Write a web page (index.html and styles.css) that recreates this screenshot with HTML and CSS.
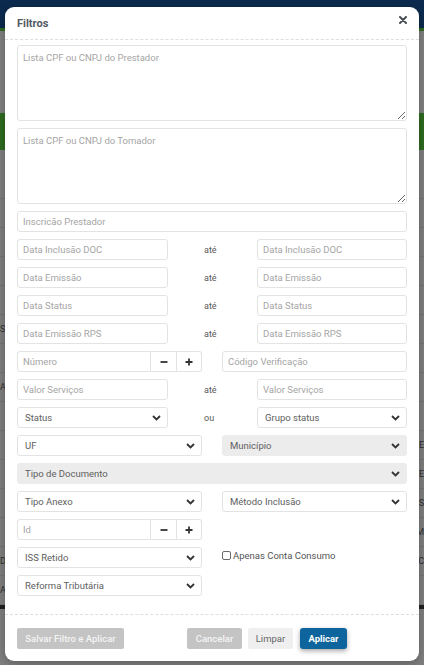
FILE: index.html
```html
<!DOCTYPE html>
<html lang="pt-BR">
<head>
<meta charset="utf-8">
<title>Filtros</title>
<link rel="stylesheet" href="styles.css">
</head>
<body>
<div class="page">
  <div class="topbar"></div>
  <div class="accent"></div>
  <div class="page-top"></div>
  <div class="green-band"></div>
  <div class="table">
    <div class="trow"><span></span><span></span></div>
    <div class="trow"><span></span><span></span></div>
    <div class="trow"><span></span><span></span></div>
    <div class="trow"><span></span><span></span></div>
    <div class="trow"><span></span><span></span></div>
    <div class="trow"><span>S</span><span></span></div>
    <div class="trow"><span></span><span></span></div>
    <div class="trow"><span>A</span><span></span></div>
    <div class="trow"><span></span><span></span></div>
    <div class="trow"><span></span><span>E</span></div>
    <div class="trow"><span></span><span>E</span></div>
    <div class="trow"><span></span><span>S</span></div>
    <div class="trow"><span></span><span>M</span></div>
    <div class="trow"><span>D</span><span>IC</span></div>
    <div class="trow"><span>A</span><span></span></div>
    <div class="tfoot"></div>
  </div>
</div>

<div class="modal">
  <div class="modal-header">
    <h2 class="modal-title">Filtros</h2>
    <button class="close" type="button" aria-label="Fechar">
      <svg width="8" height="8" viewBox="0 0 8 8"><path d="M1 1L7 7M7 1L1 7" stroke="#4b4f56" stroke-width="2" stroke-linecap="round"/></svg>
    </button>
  </div>

  <div class="modal-body">
    <textarea class="field area" placeholder="Lista CPF ou CNPJ do Prestador"></textarea>
    <textarea class="field area" placeholder="Lista CPF ou CNPJ do Tomador"></textarea>
    <input class="field" placeholder="Inscricão Prestador">

    <div class="range">
      <input class="field" placeholder="Data Inclusão DOC">
      <span class="sep">até</span>
      <input class="field" placeholder="Data Inclusão DOC">
    </div>
    <div class="range">
      <input class="field" placeholder="Data Emissão">
      <span class="sep">até</span>
      <input class="field" placeholder="Data Emissão">
    </div>
    <div class="range">
      <input class="field" placeholder="Data Status">
      <span class="sep">até</span>
      <input class="field" placeholder="Data Status">
    </div>
    <div class="range">
      <input class="field" placeholder="Data Emissão RPS">
      <span class="sep">até</span>
      <input class="field" placeholder="Data Emissão RPS">
    </div>

    <div class="pair">
      <div class="stepper">
        <input class="field" placeholder="Número">
        <button class="step-btn" type="button"><svg width="8" height="8" viewBox="0 0 8 8"><path d="M0.5 4H7.5" stroke="#333" stroke-width="1.8"/></svg></button>
        <button class="step-btn last" type="button"><svg width="8" height="8" viewBox="0 0 8 8"><path d="M0.5 4H7.5M4 0.5V7.5" stroke="#333" stroke-width="1.8"/></svg></button>
      </div>
      <input class="field" placeholder="Código Verificação">
    </div>

    <div class="range">
      <input class="field" placeholder="Valor Serviços">
      <span class="sep">até</span>
      <input class="field" placeholder="Valor Serviços">
    </div>

    <div class="range">
      <div class="select"><span>Status</span><svg class="chev" width="9" height="6" viewBox="0 0 9 6"><path d="M1 1L4.5 4.5L8 1" fill="none" stroke="#333" stroke-width="1.8"/></svg></div>
      <span class="sep">ou</span>
      <div class="select"><span>Grupo status</span><svg class="chev" width="9" height="6" viewBox="0 0 9 6"><path d="M1 1L4.5 4.5L8 1" fill="none" stroke="#333" stroke-width="1.8"/></svg></div>
    </div>

    <div class="pair">
      <div class="select"><span>UF</span><svg class="chev" width="9" height="6" viewBox="0 0 9 6"><path d="M1 1L4.5 4.5L8 1" fill="none" stroke="#333" stroke-width="1.8"/></svg></div>
      <div class="select disabled"><span>Município</span><svg class="chev" width="9" height="6" viewBox="0 0 9 6"><path d="M1 1L4.5 4.5L8 1" fill="none" stroke="#333" stroke-width="1.8"/></svg></div>
    </div>

    <div class="select disabled"><span>Tipo de Documento</span><svg class="chev" width="9" height="6" viewBox="0 0 9 6"><path d="M1 1L4.5 4.5L8 1" fill="none" stroke="#333" stroke-width="1.8"/></svg></div>

    <div class="pair">
      <div class="select"><span>Tipo Anexo</span><svg class="chev" width="9" height="6" viewBox="0 0 9 6"><path d="M1 1L4.5 4.5L8 1" fill="none" stroke="#333" stroke-width="1.8"/></svg></div>
      <div class="select"><span>Método Inclusão</span><svg class="chev" width="9" height="6" viewBox="0 0 9 6"><path d="M1 1L4.5 4.5L8 1" fill="none" stroke="#333" stroke-width="1.8"/></svg></div>
    </div>

    <div class="pair">
      <div class="stepper">
        <input class="field" placeholder="Id">
        <button class="step-btn" type="button"><svg width="8" height="8" viewBox="0 0 8 8"><path d="M0.5 4H7.5" stroke="#333" stroke-width="1.8"/></svg></button>
        <button class="step-btn last" type="button"><svg width="8" height="8" viewBox="0 0 8 8"><path d="M0.5 4H7.5M4 0.5V7.5" stroke="#333" stroke-width="1.8"/></svg></button>
      </div>
    </div>

    <div class="pair">
      <div class="select"><span>ISS Retido</span><svg class="chev" width="9" height="6" viewBox="0 0 9 6"><path d="M1 1L4.5 4.5L8 1" fill="none" stroke="#333" stroke-width="1.8"/></svg></div>
      <label class="check"><input type="checkbox" class="box"><span>Apenas Conta Consumo</span></label>
    </div>

    <div class="pair">
      <div class="select"><span>Reforma Tributária</span><svg class="chev" width="9" height="6" viewBox="0 0 9 6"><path d="M1 1L4.5 4.5L8 1" fill="none" stroke="#333" stroke-width="1.8"/></svg></div>
    </div>
  </div>

  <div class="modal-footer">
    <button class="btn btn-muted btn-save" type="button">Salvar Filtro e Aplicar</button>
    <div class="actions">
      <button class="btn btn-muted btn-cancel" type="button">Cancelar</button>
      <button class="btn btn-light" type="button">Limpar</button>
      <button class="btn btn-primary" type="button">Aplicar</button>
    </div>
  </div>
</div>
</body>
</html>
```

FILE: styles.css
```css
* {
  box-sizing: border-box;
}

body {
  margin: 0;
  width: 424px;
  height: 665px;
  overflow: hidden;
  position: relative;
  background: #7e7e7e;
  font-family: Roboto, "Liberation Sans", Arial, sans-serif;
}

/* dimmed page behind the dialog */
.topbar {
  height: 28px;
  background: #0c2a4d;
}

.accent {
  height: 3px;
  background: #2f6b21;
}

.page-top {
  height: 82px;
  background: #7f7f7f;
}

.green-band {
  height: 37px;
  background: #2e6a20;
}

.table {
  padding-top: 20px;
}

.trow {
  height: 29px;
  border-bottom: 1px solid #737373;
  display: flex;
  align-items: center;
  justify-content: space-between;
  font-size: 9px;
  color: #2e2e2e;
}

.tfoot {
  height: 4px;
  background: #1f1f1f;
}

/* dialog */
.modal {
  position: absolute;
  top: 7px;
  left: 5px;
  width: 414px;
  height: 654px;
  background: #fff;
  border-radius: 9px;
  display: flex;
  flex-direction: column;
  box-shadow: 0 2px 8px rgba(0, 0, 0, 0.25);
}

.modal-header {
  flex: none;
  height: 33px;
  padding: 0 12px;
  display: flex;
  align-items: center;
  justify-content: space-between;
  border-bottom: 1px dashed #dedede;
}

.modal-title {
  margin: 0;
  font-size: 11px;
  font-weight: 700;
  color: #525963;
}

.close {
  border: 0;
  background: none;
  padding: 0;
  width: 8px;
  height: 8px;
  margin-top: -7px;
  display: flex;
}

.modal-body {
  flex: 1;
  padding: 5px 12px 17px;
  display: flex;
  flex-direction: column;
  gap: 7px;
}

.field {
  display: block;
  width: 100%;
  height: 21px;
  margin: 0;
  padding: 0 5px;
  border: 1px solid #e3e3e3;
  border-radius: 3px;
  background: #fff;
  font-family: Roboto, "Liberation Sans", Arial, sans-serif;
  font-size: 9.5px;
  color: #555;
  outline: none;
}

.field::placeholder {
  color: #a5a5a5;
}

.area {
  height: 76px;
  padding: 6px 5px;
  resize: vertical;
}

.range {
  display: grid;
  grid-template-columns: 151px 1fr 150px;
  align-items: center;
}

.sep {
  padding-left: 36px;
  font-size: 9px;
  color: #5a5a5a;
}

.pair {
  display: grid;
  grid-template-columns: 1fr 1fr;
  column-gap: 20px;
}

.stepper {
  display: flex;
}

.stepper .field {
  flex: 1;
  min-width: 0;
  border-radius: 3px 0 0 3px;
}

.step-btn {
  flex: none;
  width: 26px;
  height: 21px;
  padding: 0;
  border: 1px solid #e3e3e3;
  border-left: 0;
  background: #fff;
  display: flex;
  align-items: center;
  justify-content: center;
}

.step-btn.last {
  width: 25px;
  border-radius: 0 3px 3px 0;
}

.select {
  height: 21px;
  padding: 0 6px 0 7px;
  border: 1px solid #e3e3e3;
  border-radius: 3px;
  background: #fff;
  display: flex;
  align-items: center;
  justify-content: space-between;
  font-size: 9.5px;
  color: #606060;
}

.select.disabled {
  background: #ececec;
  border-color: #ececec;
}

.chev {
  flex: none;
}

.check {
  display: flex;
  align-items: center;
  gap: 2px;
  padding-top: 3px;
  align-self: start;
  font-size: 9.5px;
  color: #555;
}

.box {
  appearance: none;
  margin: 0;
  width: 9px;
  height: 9px;
  border: 1px solid #6a6a6a;
  border-radius: 2px;
  background: #fff;
}

.modal-footer {
  flex: none;
  display: flex;
  padding: 13px 12px 12px;
  border-top: 1px dashed #dedede;
}

.btn {
  height: 21px;
  padding: 0;
  border: 0;
  border-radius: 2px;
  font-family: Roboto, "Liberation Sans", Arial, sans-serif;
  font-size: 9.5px;
  font-weight: 500;
}

.btn-muted {
  background: #c4c4c4;
  color: #f4f4f4;
}

.btn-save {
  width: 107px;
}

.actions {
  display: flex;
  gap: 6px;
  margin-left: 63px;
}

.btn-cancel {
  width: 55px;
}

.btn-light {
  width: 45px;
  background: #efefef;
  color: #666;
  font-weight: 400;
}

.btn-primary {
  width: 47px;
  margin-left: 1px;
  border-radius: 3px;
  background: #0e649d;
  color: #fff;
  font-weight: 700;
  box-shadow: 0 2px 5px rgba(0, 0, 0, 0.35);
}
```
